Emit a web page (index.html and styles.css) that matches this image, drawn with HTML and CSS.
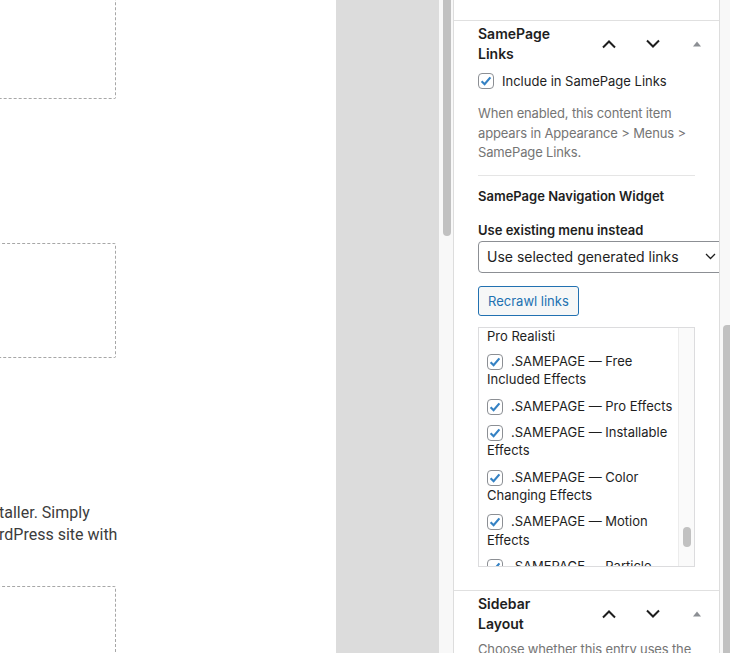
FILE: index.html
```html
<!DOCTYPE html>
<html lang="en">
<head>
<meta charset="utf-8">
<title>Editor</title>
<link rel="stylesheet" href="styles.css">
</head>
<body>
<div class="app">
  <main class="canvas">
    <div class="placeholder ph1"></div>
    <div class="placeholder ph2"></div>
    <p class="copy">taller. Simply<br>rdPress site with</p>
    <div class="placeholder ph3"></div>
  </main>
  <div class="gutter"></div>
  <div class="vscroll"><div class="vthumb"></div></div>
  <aside class="sidebar">
    <div class="pb-prev"></div>
    <section class="postbox">
      <div class="pb-header">
        <h2 class="pb-title">SamePage Links</h2>
        <div class="pb-actions">
          <span class="icon-btn"><svg width="16" height="10" viewBox="0 0 16 10"><path d="M2 8.5 L8 2.5 L14 8.5" fill="none" stroke="#1e1e1e" stroke-width="2"/></svg></span>
          <span class="icon-btn"><svg width="16" height="10" viewBox="0 0 16 10"><path d="M2 1.5 L8 7.5 L14 1.5" fill="none" stroke="#1e1e1e" stroke-width="2"/></svg></span>
          <span class="icon-btn"><svg width="8" height="6" viewBox="0 0 8 6"><path d="M0 5.5 L4 0.5 L8 5.5 Z" fill="#8c8f94"/></svg></span>
        </div>
      </div>
      <div class="pb-inside">
        <label class="check-row"><span class="cb"><svg width="14" height="14" viewBox="0 0 14 14"><path d="M2.6 7.2 L5.6 10.2 L11.4 3.4" fill="none" stroke="#3582c4" stroke-width="2.2"/></svg></span><span>Include in SamePage Links</span></label>
        <p class="desc">When enabled, this content item appears in Appearance &gt; Menus &gt; SamePage Links.</p>
        <hr class="sep">
        <h3 class="sub">SamePage Navigation Widget</h3>
        <h4 class="field-label">Use existing menu instead</h4>
        <div class="select"><span>Use selected generated links</span><svg width="11" height="7" viewBox="0 0 11 7"><path d="M1 1 L5.5 5.5 L10 1" fill="none" stroke="#1e1e1e" stroke-width="1.3"/></svg></div>
        <span class="btn">Recrawl links</span>
        <div class="checklist">
          <div class="items">
            <div class="item first">Pro Realisti</div>
            <label class="item"><span class="cb inline"><svg width="14" height="14" viewBox="0 0 14 14"><path d="M2.6 7.2 L5.6 10.2 L11.4 3.4" fill="none" stroke="#3582c4" stroke-width="2.2"/></svg></span>.SAMEPAGE — Free Included Effects</label>
            <label class="item"><span class="cb inline"><svg width="14" height="14" viewBox="0 0 14 14"><path d="M2.6 7.2 L5.6 10.2 L11.4 3.4" fill="none" stroke="#3582c4" stroke-width="2.2"/></svg></span>.SAMEPAGE — Pro Effects</label>
            <label class="item"><span class="cb inline"><svg width="14" height="14" viewBox="0 0 14 14"><path d="M2.6 7.2 L5.6 10.2 L11.4 3.4" fill="none" stroke="#3582c4" stroke-width="2.2"/></svg></span>.SAMEPAGE — Installable Effects</label>
            <label class="item"><span class="cb inline"><svg width="14" height="14" viewBox="0 0 14 14"><path d="M2.6 7.2 L5.6 10.2 L11.4 3.4" fill="none" stroke="#3582c4" stroke-width="2.2"/></svg></span>.SAMEPAGE — Color Changing Effects</label>
            <label class="item"><span class="cb inline"><svg width="14" height="14" viewBox="0 0 14 14"><path d="M2.6 7.2 L5.6 10.2 L11.4 3.4" fill="none" stroke="#3582c4" stroke-width="2.2"/></svg></span>.SAMEPAGE — Motion Effects</label>
            <label class="item"><span class="cb inline"><svg width="14" height="14" viewBox="0 0 14 14"><path d="M2.6 7.2 L5.6 10.2 L11.4 3.4" fill="none" stroke="#3582c4" stroke-width="2.2"/></svg></span>.SAMEPAGE — Particle Effects</label>
          </div>
          <div class="list-scroll"><div class="list-thumb"></div></div>
        </div>
      </div>
    </section>
    <section class="postbox">
      <div class="pb-header">
        <h2 class="pb-title">Sidebar Layout</h2>
        <div class="pb-actions">
          <span class="icon-btn"><svg width="16" height="10" viewBox="0 0 16 10"><path d="M2 8.5 L8 2.5 L14 8.5" fill="none" stroke="#1e1e1e" stroke-width="2"/></svg></span>
          <span class="icon-btn"><svg width="16" height="10" viewBox="0 0 16 10"><path d="M2 1.5 L8 7.5 L14 1.5" fill="none" stroke="#1e1e1e" stroke-width="2"/></svg></span>
          <span class="icon-btn"><svg width="8" height="6" viewBox="0 0 8 6"><path d="M0 5.5 L4 0.5 L8 5.5 Z" fill="#8c8f94"/></svg></span>
        </div>
      </div>
      <div class="pb-inside tight">
        <p class="desc flush">Choose whether this entry uses the sidebar layout.</p>
      </div>
    </section>
  </aside>
  <div class="rscroll"><div class="rthumb"></div></div>
</div>
</body>
</html>
```

FILE: styles.css
```css
html, body {
  margin: 0;
  padding: 0;
  height: 653px;
  overflow: hidden;
  background: #fff;
}

.app {
  display: flex;
  height: 653px;
  width: 730px;
  overflow: hidden;
}

/* left canvas */
.canvas {
  width: 336px;
  flex: none;
  overflow: hidden;
  background: #fff;
  display: flex;
  flex-direction: column;
}

.placeholder {
  box-sizing: border-box;
  margin-left: -20px;
  width: 136px;
  border: 1px dashed #a7a7a7;
  border-radius: 2px;
  flex: none;
}

.ph1 { margin-top: -30px; height: 129px; }
.ph2 { margin-top: 144px; height: 115px; }
.ph3 { margin-top: 40px; height: 120px; }

.copy {
  margin: 144px 0 0 -1px;
  font-family: Roboto, "Liberation Sans", sans-serif;
  font-size: 16px;
  line-height: 22px;
  color: #3c3c3c;
  white-space: nowrap;
}

.gutter {
  width: 103px;
  flex: none;
  background: #dcdcdc;
}

.vscroll {
  width: 14px;
  flex: none;
  box-sizing: border-box;
  padding: 0 2px 0 4px;
  background: #f8f8f8;
}

.vthumb {
  width: 8px;
  height: 236px;
  background: #c1c1c1;
  border-radius: 0 0 4px 4px;
}

/* sidebar */
.sidebar {
  width: 267px;
  flex: none;
  box-sizing: border-box;
  border-left: 1px solid #dddddd;
  border-right: 1px solid #dddddd;
  background: #fff;
  overflow: hidden;
  font-family: Inter, "Noto Sans", sans-serif;
  color: #1e1e1e;
}

.pb-prev { height: 20px; }

.postbox {
  border-top: 1px solid #e0e0e0;
}

.pb-header {
  display: flex;
  align-items: center;
  padding: 3px 0 3px 24px;
}

.pb-title {
  margin: 0 auto 0 0;
  width: 96px;
  font-size: 14px;
  line-height: 19.6px;
  font-weight: 600;
}

.pb-actions {
  display: flex;
}

.icon-btn {
  width: 44px;
  height: 36px;
  display: flex;
  align-items: center;
  justify-content: center;
}

.pb-inside {
  padding: 7px 24px 23px 24px;
  display: flex;
  flex-direction: column;
  align-items: flex-start;
}

.pb-inside.tight { padding-top: 4px; }

.check-row {
  display: flex;
  align-items: center;
  gap: 8px;
  height: 16px;
  font-size: 13px;
  line-height: 16px;
}

.cb {
  box-sizing: border-box;
  width: 16px;
  height: 16px;
  border: 1px solid #8c8f94;
  border-radius: 4px;
  background: #fff;
  display: inline-flex;
  align-items: center;
  justify-content: center;
  flex: none;
}

.cb.inline {
  vertical-align: -3px;
  margin-right: 8px;
}

.desc {
  margin: 15px 0 0;
  font-size: 13px;
  line-height: 19.5px;
  color: #757575;
  letter-spacing: -0.15px;
}

.desc.flush { margin-top: 0; }

.sep {
  align-self: stretch;
  border: 0;
  border-top: 1px solid #e5e5e5;
  margin: 12px 0 0;
  height: 0;
}

.sub {
  margin: 11.7px 0 0;
  font-size: 13px;
  line-height: 19.5px;
  font-weight: 600;
}

.field-label {
  margin: 14.5px 0 0;
  font-size: 13px;
  line-height: 19.5px;
  font-weight: 600;
}

.select {
  box-sizing: border-box;
  width: 250px;
  height: 32px;
  border: 1px solid #8c8f94;
  border-radius: 4px;
  display: flex;
  align-items: center;
  padding: 0 11px 0 8px;
  font-size: 14px;
  color: #1e1e1e;
  flex: none;
}

.select svg { margin-left: auto; }

.btn {
  margin-top: 13px;
  box-sizing: border-box;
  height: 30px;
  padding: 0 9px;
  display: inline-flex;
  align-items: center;
  border: 1px solid #2271b1;
  border-radius: 3px;
  background: #f6f7f7;
  color: #2271b1;
  font-size: 13px;
}

.checklist {
  margin-top: 11.3px;
  box-sizing: border-box;
  width: 217px;
  height: 240px;
  border: 1px solid #dcdcde;
  display: flex;
  overflow: hidden;
}

.items {
  flex: 1;
  padding: 0 0 0 8px;
  overflow: hidden;
  font-size: 13px;
  line-height: 18.2px;
  color: #1e1e1e;
}

.item {
  display: block;
  margin-bottom: 8.3px;
}

.item.first { margin-top: -1.5px; margin-bottom: 7px; }

.list-scroll {
  width: 15px;
  flex: none;
  border-left: 1px solid #ececec;
  background: #fafafa;
  display: flex;
  flex-direction: column;
  align-items: center;
}

.list-thumb {
  margin-top: 199px;
  width: 8px;
  height: 20px;
  border-radius: 4px;
  background: #c1c1c1;
}

.rscroll {
  width: 10px;
  flex: none;
  background: #f8f8f8;
  padding-top: 325px;
  box-sizing: border-box;
}

.rthumb {
  margin-left: 3px;
  width: 7px;
  height: 340px;
  background: #c1c1c1;
  border-radius: 4px 0 0 0;
}
```
